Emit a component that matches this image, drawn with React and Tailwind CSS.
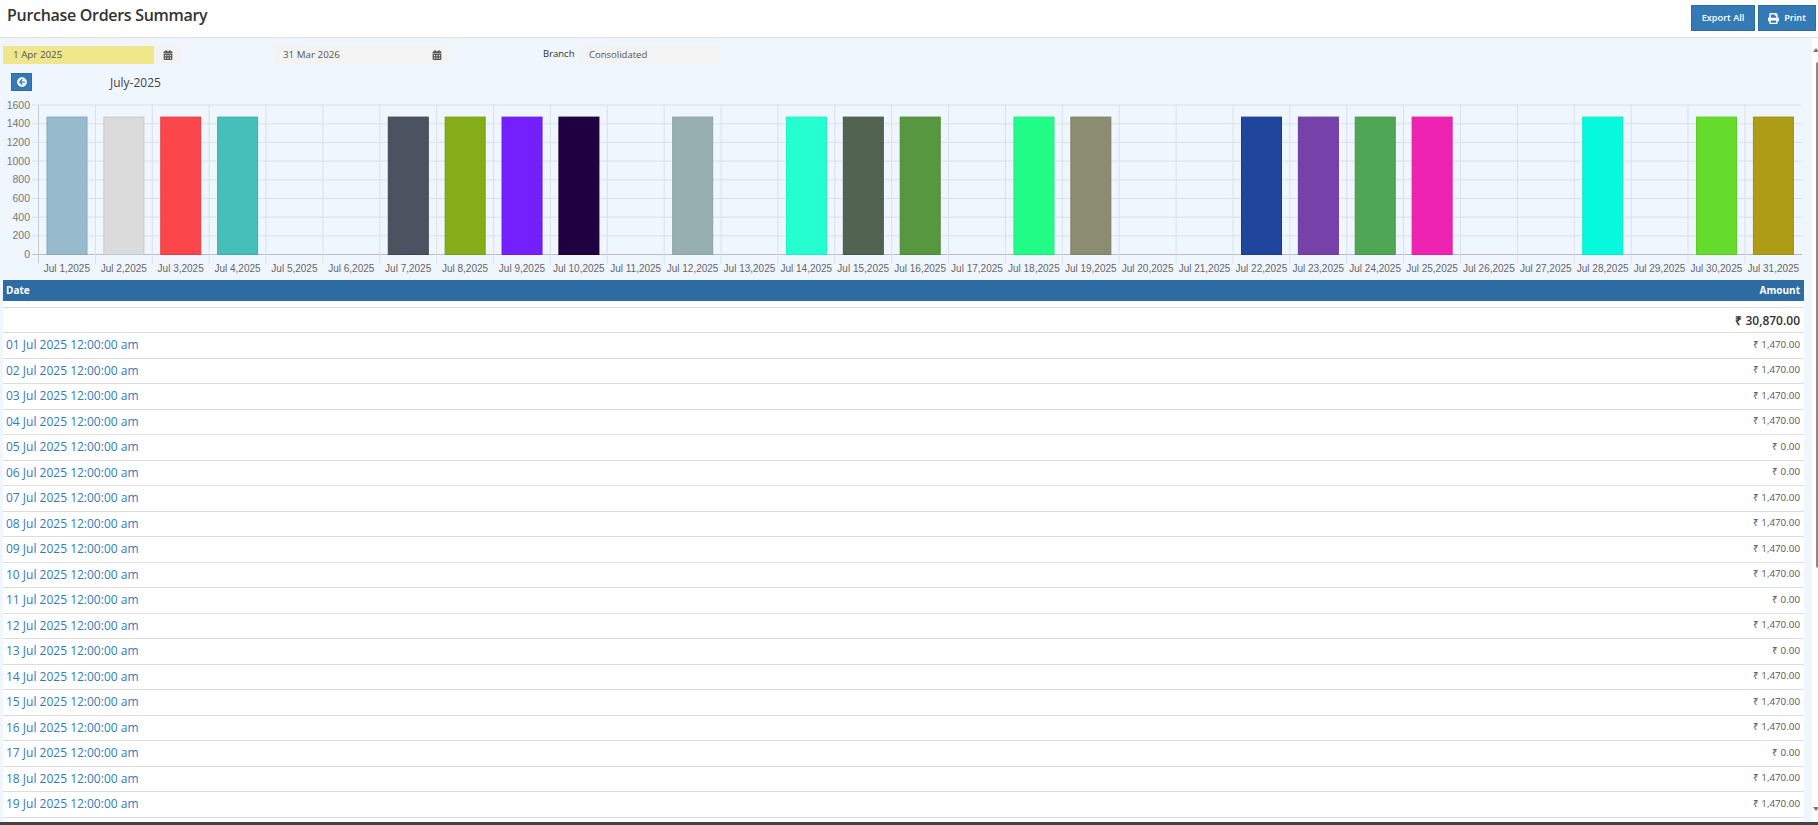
import { FaCalendarAlt, FaPrint, FaArrowCircleLeft } from 'react-icons/fa';

const BAR_COLORS = [
  ['#98bacd', '#85a7ba'], ['#dbdbdb', '#c8c8c8'], ['#fb464b', '#e83a44'], ['#46bfbb', '#38aeaa'],
  null, null,
  ['#4c5360', '#3f4653'], ['#85ad17', '#789f10'], ['#7420fc', '#6a1eea'], ['#1f0040', '#160030'],
  null,
  ['#97afb1', '#8aa2a4'],
  null,
  ['#25ffd0', '#20eec4'], ['#536352', '#475747'], ['#57973f', '#4d8a37'],
  null,
  ['#21fd87', '#1eea7c'], ['#8c8c72', '#7f7f66'],
  null, null,
  ['#1f459c', '#1a3c8c'], ['#7641a9', '#6a399b'], ['#4fa655', '#46994c'], ['#ef23b1', '#de20a3'],
  null, null,
  ['#08fade', '#07e8cd'],
  null,
  ['#65db2c', '#5ccb27'], ['#ae9c16', '#a09013'],
];

const ROWS = BAR_COLORS.slice(0, 19).map((c, i) => ({
  date: String(i + 1).padStart(2, '0') + ' Jul 2025 12:00:00 am',
  amount: c ? '₹ 1,470.00' : '₹ 0.00',
}));

const LEFT = 38.5, STEP = 56.88, ZERO = 154.5, TOP = 5, TICKS = [1600, 1400, 1200, 1000, 800, 600, 400, 200, 0];

function Chart() {
  const rowH = (ZERO - TOP) / 8;
  return (
    <svg width="1812" height="175" className="block" style={{ fontFamily: '"Liberation Sans", sans-serif' }}>
      {TICKS.map((t, i) => (
        <g key={t}>
          <line x1="32" x2="1802" y1={TOP + i * rowH} y2={TOP + i * rowH} stroke={t === 0 ? '#b9bec4' : '#d9e0eb'} />
          <text x="30" y={TOP + i * rowH + 3.5} textAnchor="end" fontSize="10.5" fill="#777">{t}</text>
        </g>
      ))}
      {BAR_COLORS.map((_, i) => (
        <line key={i} x1={LEFT + i * STEP} x2={LEFT + i * STEP} y1={TOP} y2={ZERO + 9} stroke={i === 0 ? '#c6ccd6' : '#d9e0eb'} />
      ))}
      {BAR_COLORS.map((c, i) => c && (
        <rect key={i} x={LEFT + i * STEP + 8.5} y={ZERO - 137.4} width="40" height="137.4" fill={c[0]} stroke={c[1]} />
      ))}
      {BAR_COLORS.map((_, i) => (
        <text key={i} x={LEFT + i * STEP + 28.4} y={ZERO + 17.5} textAnchor="middle" fontSize="10" fill="#666">
          Jul {i + 1},2025
        </text>
      ))}
    </svg>
  );
}

export default function App() {
  return (
    <div className="h-[825px] w-[1818px] overflow-hidden flex flex-col bg-white text-[#333] font-['Open_Sans',sans-serif]">
      <div className="h-[38px] shrink-0 flex justify-between border-b border-[#e3e3e3] pl-[7px] pr-[2px] pt-[5px]">
        <h1 className="text-[16px] leading-[20px] font-semibold tracking-[-0.3px] text-[#333]">Purchase Orders Summary</h1>
        <div className="flex gap-[3px]">
          <button className="h-[26px] w-[64px] bg-[#337ab7] border border-[#2e6da4] text-white text-[9.2px] font-semibold">Export All</button>
          <button className="h-[26px] w-[58px] bg-[#337ab7] border border-[#2e6da4] text-white text-[9.2px] font-semibold flex items-center justify-center gap-[5px]">
            <FaPrint size={11} /> Print
          </button>
        </div>
      </div>

      <div className="flex-1 flex min-h-0">
        <div className="w-[1812px] bg-[#eff6fd] flex flex-col">
          <div className="flex items-center h-[18px] mt-[8px] text-[9.8px] text-[#555]">
            <div className="ml-[3px] w-[151px] h-full bg-[#f0e68c] pl-[10px] leading-[18px]">1 Apr 2025</div>
            <div className="w-[28px] h-full bg-[#f3f3f3] flex items-center justify-center">
              <FaCalendarAlt size={10} className="text-[#555]" />
            </div>
            <div className="ml-[91px] w-[179px] h-full bg-[#f3f3f3] pl-[10px] pr-[10px] flex items-center justify-between">
              <span>31 Mar 2026</span>
              <FaCalendarAlt size={10} className="text-[#555]" />
            </div>
            <span className="ml-[91px] w-[36px] text-[9.5px] text-[#333] leading-[14px] pb-[3px]">Branch</span>
            <div className="w-[141px] h-full bg-[#f3f3f3] pl-[10px] text-[9.5px] leading-[18px]">Consolidated</div>
          </div>

          <div className="flex items-center h-[18px] mt-[9px] ml-[11px]">
            <button className="w-[21px] h-[18px] bg-[#337ab7] border border-[#2e6da4] flex items-center justify-center">
              <FaArrowCircleLeft size={10} className="text-white" />
            </button>
            <span className="ml-[78px] pt-[1px] text-[12px] text-[#444]">July-2025</span>
          </div>

          <div className="mt-[9px]"><Chart /></div>

          <div className="ml-[3px] w-[1801px] flex-1 flex flex-col mt-[5px]">
            <div className="h-[21px] shrink-0 bg-[#2c6ca3] text-white text-[10px] font-bold flex items-center justify-between pl-[3px] pr-[4px]">
              <span>Date</span>
              <span>Amount</span>
            </div>
            <div className="flex-1 bg-white pt-[6px]">
              <div className="h-[26px] border-y border-[#ddd] flex items-center justify-end pr-[4px] pt-[1px] text-[12px] font-semibold text-[#333]">
                ₹ 30,870.00
              </div>
              {ROWS.map(r => (
                <div key={r.date} className="h-[25.5px] border-b border-[#ddd] flex items-center justify-between pl-[3px] pr-[4px]">
                  <a className="text-[12px] text-[#337ab7]">{r.date}</a>
                  <span className="text-[9.8px] text-[#555]">{r.amount}</span>
                </div>
              ))}
            </div>
          </div>
        </div>

        <div className="w-[6px] bg-white flex flex-col items-end">
          <div className="mt-[10px] w-0 h-0 border-x-[3px] border-x-transparent border-b-[4px] border-b-[#777] -mr-[1px]"></div>
          <div className="w-[2px] h-[506px] mt-[10px] bg-[#8a8a8a] rounded-l-sm"></div>
          <div className="mt-auto mb-[11px] w-0 h-0 border-x-[3px] border-x-transparent border-t-[4px] border-t-[#777] -mr-[1px]"></div>
        </div>
      </div>

      <div className="h-[3px] shrink-0 bg-[#444]"></div>
    </div>
  );
}
